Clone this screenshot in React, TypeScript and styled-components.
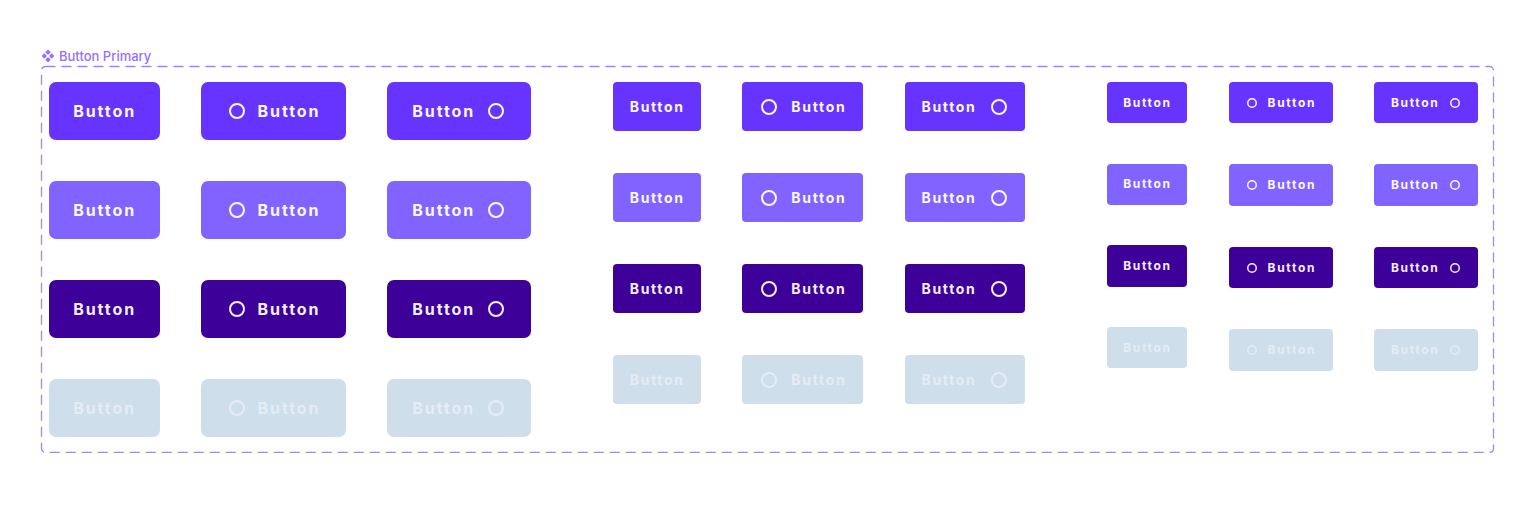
import styled, { createGlobalStyle } from "styled-components";

type Size = "lg" | "md" | "sm";
type Variant = "default" | "hover" | "pressed" | "disabled";
type IconSide = "none" | "left" | "right";

const GlobalStyle = createGlobalStyle`
  body {
    margin: 0;
    background: #ffffff;
    font-family: Inter, "Noto Sans", sans-serif;
  }
`;

const sizes = {
  lg: { height: 57.6, font: 16, track: 0.12, radius: 7, icon: 20, ring: 16, stroke: 2, gap: 11, rowGap: 41.4 },
  md: { height: 49.3, font: 14, track: 0.12, radius: 4, icon: 20, ring: 16, stroke: 2, gap: 12, rowGap: 41.7 },
  sm: { height: 41.3, font: 12, track: 0.14, radius: 4, icon: 12, ring: 10, stroke: 1.5, gap: 10, rowGap: 41.2 },
};

const widths: Record<Size, [number, number]> = {
  lg: [110.7, 144.3],
  md: [87.7, 120.8],
  sm: [80, 104],
};

const palette: Record<Variant, { bg: string; fg: string }> = {
  default: { bg: "#6633ff", fg: "#faf8ff" },
  hover: { bg: "#8164ff", fg: "#faf8ff" },
  pressed: { bg: "#3d0099", fg: "#f4efff" },
  disabled: { bg: "#cfdeeb", fg: "#e4ecf5" },
};

const variants: Variant[] = ["default", "hover", "pressed", "disabled"];

const Page = styled.div`
  padding: 48px 0 0 41px;
`;

const Caption = styled.div`
  display: flex;
  align-items: center;
  gap: 4px;
  height: 16px;
  padding-left: 0;
  color: #9470ff;
  font-size: 13px;
  font-weight: 500;
  line-height: 16px;
`;

const Frame = styled.div`
  position: relative;
  box-sizing: border-box;
  width: 1453px;
  height: 387px;
  margin-top: 2px;
  padding: 16px 0 0 8.3px;
`;

const DashOutline = styled.svg`
  position: absolute;
  inset: 0;
  width: 100%;
  height: 100%;
  pointer-events: none;
  overflow: visible;
`;

const Groups = styled.div`
  display: flex;
  gap: 82px;
`;

const Group = styled.div`
  display: flex;
  gap: 41.4px;
`;

const Column = styled.div<{ $gap: number }>`
  display: flex;
  flex-direction: column;
  gap: ${(p) => p.$gap}px;
`;

const Button = styled.button<{ $size: Size; $variant: Variant; $width: number }>`
  display: flex;
  align-items: center;
  justify-content: center;
  gap: ${(p) => sizes[p.$size].gap}px;
  box-sizing: border-box;
  width: ${(p) => p.$width}px;
  height: ${(p) => sizes[p.$size].height}px;
  padding: 0;
  border: none;
  border-radius: ${(p) => sizes[p.$size].radius}px;
  background: ${(p) => palette[p.$variant].bg};
  color: ${(p) => palette[p.$variant].fg};
  font-family: Inter, "Noto Sans", sans-serif;
  font-size: ${(p) => sizes[p.$size].font}px;
  font-weight: 700;
  letter-spacing: ${(p) => sizes[p.$size].track}em;
  cursor: ${(p) => (p.$variant === "disabled" ? "default" : "pointer")};
`;

const Label = styled.span`
  line-height: 1;
`;

function Ring({ size }: { size: Size }) {
  const s = sizes[size];
  const r = (s.ring - s.stroke) / 2;
  return (
    <svg width={s.icon} height={s.icon} viewBox={`0 0 ${s.icon} ${s.icon}`}>
      <circle
        cx={s.icon / 2}
        cy={s.icon / 2}
        r={r}
        fill="none"
        stroke="currentColor"
        strokeWidth={s.stroke}
      />
    </svg>
  );
}

function ComponentIcon() {
  return (
    <svg width="14" height="14" viewBox="0 0 14 14">
      <path d="M7 0.6 L9.7 3.3 L7 6 L4.3 3.3 Z" fill="currentColor" />
      <path d="M7 8 L9.7 10.7 L7 13.4 L4.3 10.7 Z" fill="currentColor" />
      <path d="M3.3 4.3 L6 7 L3.3 9.7 L0.6 7 Z" fill="currentColor" />
      <path d="M10.7 4.3 L13.4 7 L10.7 9.7 L8 7 Z" fill="currentColor" />
    </svg>
  );
}

function PrimaryButton({
  size,
  variant,
  icon,
  width,
}: {
  size: Size;
  variant: Variant;
  icon: IconSide;
  width: number;
}) {
  return (
    <Button $size={size} $variant={variant} $width={width}>
      {icon === "left" && <Ring size={size} />}
      <Label>Button</Label>
      {icon === "right" && <Ring size={size} />}
    </Button>
  );
}

function SizeGroup({ size }: { size: Size }) {
  const [plain, withIcon] = widths[size];
  const columns: { icon: IconSide; width: number; gap: number }[] = [
    { icon: "none", width: plain, gap: size === "sm" ? 40.4 : sizes[size].rowGap },
    { icon: "left", width: withIcon, gap: sizes[size].rowGap },
    { icon: "right", width: withIcon, gap: sizes[size].rowGap },
  ];
  return (
    <Group>
      {columns.map((col) => (
        <Column key={col.icon} $gap={col.gap}>
          {variants.map((v) => (
            <PrimaryButton
              key={v}
              size={size}
              variant={v}
              icon={col.icon}
              width={col.width}
            />
          ))}
        </Column>
      ))}
    </Group>
  );
}

export default function App() {
  return (
    <>
      <GlobalStyle />
      <Page>
        <Caption>
          <ComponentIcon />
          Button Primary
        </Caption>
        <Frame>
          <DashOutline>
            <rect
              x="0.5"
              y="0.5"
              width="calc(100% - 1px)"
              height="calc(100% - 1px)"
              rx="4"
              fill="none"
              stroke="#a084ff"
              strokeWidth="1.3"
              strokeDasharray="10 6"
            />
          </DashOutline>
          <Groups>
            <SizeGroup size="lg" />
            <SizeGroup size="md" />
            <SizeGroup size="sm" />
          </Groups>
        </Frame>
      </Page>
    </>
  );
}
